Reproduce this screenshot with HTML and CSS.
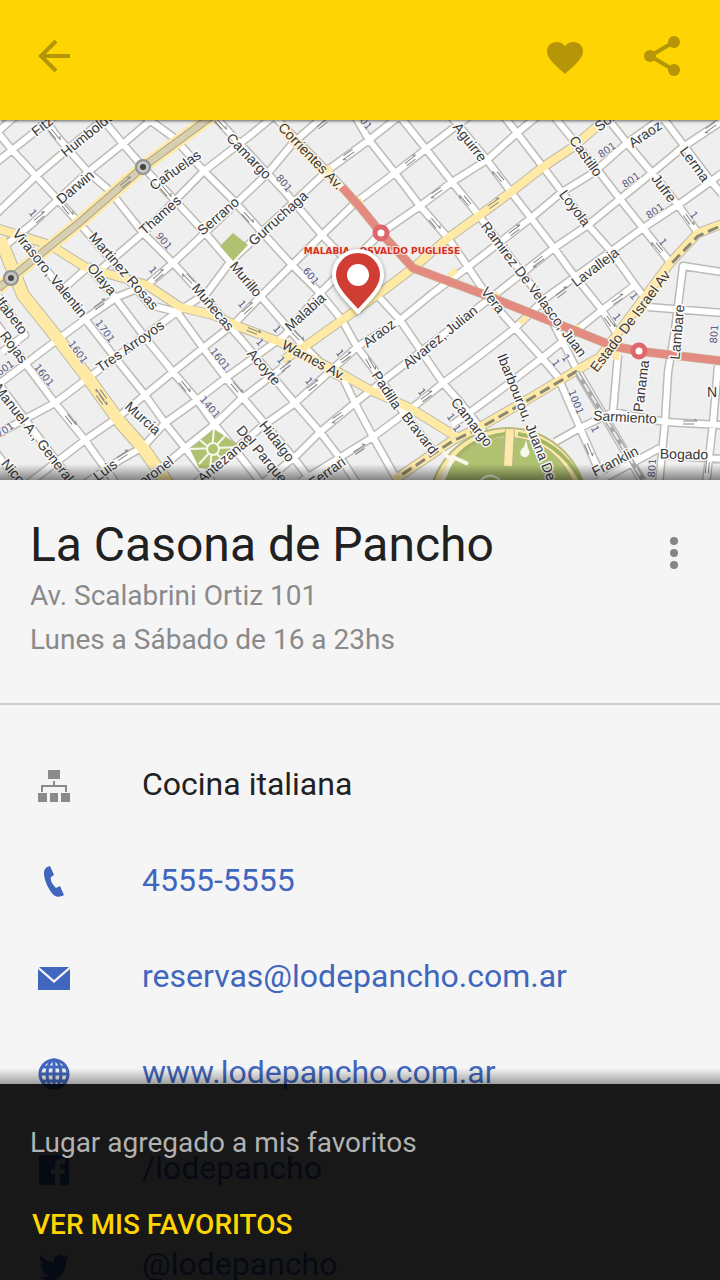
FILE: index.html
```html
<!DOCTYPE html>
<html lang="es">
<head>
<meta charset="utf-8">
<meta name="viewport" content="width=device-width, initial-scale=1">
<title>La Casona de Pancho</title>
<link rel="stylesheet" href="styles.css">
</head>
<body>
<div class="app">
  <header class="toolbar">
    <button class="icon-button" type="button" aria-label="Volver">
      <svg width="32" height="32" viewBox="0 0 32 32"><path class="line" d="M32 16H3M18 1 3 16l15 15"/></svg>
    </button>
    <div class="toolbar-actions">
      <button class="icon-button" type="button" aria-label="Favorito">
        <svg width="36" height="40" viewBox="0 0 36 40"><path d="M18 38 15.4 35.6C6.2 27.3 0 21.7 0 14.9 0 9.9 4.3 6 9.6 6c3.400 0 6.600 1.600 8.400 4.200C19.800 7.600 23 6 26.400 6 31.700 6 36 9.900 36 14.900c0 6.800-6.200 12.400-15.400 20.700Z"/></svg>
      </button>
      <button class="icon-button" type="button" aria-label="Compartir">
        <svg width="36" height="40" viewBox="0 0 36 40"><path class="line" d="M30 6 6 20l24 14"/><circle cx="30" cy="6" r="6"/><circle cx="6" cy="20" r="6"/><circle cx="30" cy="34" r="6"/></svg>
      </button>
    </div>
  </header>

  <section class="map" aria-label="Mapa">
    <svg class="map-canvas" viewBox="0 120 720 360" preserveAspectRatio="xMidYMid slice">
      <defs>
        <path id="streets" d="M-6 128 12 150 36 176 80 224 150 305 177 312 203 348 225 377 255 412 297 462 312 482
          M42 114 55 134 88 172 109 190 143 233 173 263 187 278 240 338 295 403 320 432 343 462 356 482
          M100 116 123 144 143 167 167 192 207 235 230 262 262 298 300 342 330 372 342 378
          M144 116 173 137 204 171 233 200 260 230 292 265 320 293 342 320 357 347 373 368 400 408 437 455
          M214 116 267 173 285 192 322 235 360 275 377 295 400 320 443 383 460 402 494 445
          M272 114 342 187
          M355 116 369 140 395 173 420 206 448 238 468 267 490 300 515 328 542 358 558 377 580 428 604 482
          M398 114 426 149 452 182 477 213 540 297 577 370
          M449 114 487 160 511 192 531 218 554 248 570 270 602 310 618 336
          M502 114 517 133 543 167 562 192 588 225 610 250 635 285 646 300
          M552 114 600 173 620 199 643 228 670 262
          M604 114 627 143 652 173 678 205 698 233
          M660 114 685 147 710 180 722 194
          M-8 166 12 150 55 116
          M-4 214 36 176 62 154 110 114
          M0 250 33 223 88 172 123 144 158 114
          M-6 135 20 112
          M100 270 143 233 204 171 252 134 276 114
          M0 383 53 343 88 317 117 297 147 285 173 263 207 231 268 173 293 143 324 116
          M-2 434 23 420 55 403 88 378 177 312 207 293 230 262 328 170 369 140 402 114
          M20 490 85 440 117 418 145 395 173 372 203 348 236 322 260 297 292 265 322 235 355 203 395 173 426 149 472 114
          M70 494 120 460 143 447 165 423 197 400 227 377 285 335 320 293 381 233 420 206 452 182 487 160 517 133 540 114
          M140 486 185 448 215 424 240 400 283 367
          M195 484 260 428 295 403 357 347 400 320 433 293 468 267 531 218 562 192 593 173 627 143 665 116
          M262 484 297 455 320 432 355 403 388 377 475 310 497 293 554 248 588 225 620 199 652 173 683 147 722 121
          M300 482 373 437 412 408 443 383 483 353 515 328 547 297 617 247 643 228 678 205 710 182 722 173
          M452 425 480 405 507 385 542 358 602 310 635 285
          M342 376 355 403 373 437 396 478
          M-10 285 25 335 2 352M-6 320 25 363 55 403 85 440 115 482M-8 375 72 482M-6 450 20 484
          M15 230 78 310 113 355 145 395 165 423 185 448 212 482
          M87 265 113 295 147 340 173 372 197 400 215 425 233 447 262 484
          M88 267 62 290
          M555 442 580 428 613 412 665 422 722 425M618 355 613 412
          M722 272 683 266 675 330 668 372 665 422 659 484M648 307 722 313
          M718 366 713 423 706 484M662 455 722 459M597 482 660 448M577 370 643 482"/>
        <path id="avenues" d="M-4 228 50 245 85 267 147 285 180 307 213 315 240 327 280 342 340 373 370 390 410 408 457 437
          M614 112 573 147 543 167 511 192 480 215 448 238 413 268 380 293 342 320 307 345 283 360
          M722 224 698 233 670 263 600 357 577 370 530 398 480 427 453 440 394 480"/>
        <path id="boulevard" d="M0 238 23 295 55 335 88 378 120 422 143 448 168 484"/>
        <path id="railway" d="M216 113 143 167 80 222 12 277-6 292"/>
        <path id="subway" d="M342 187 360 207 381 233 413 268 480 293 563 326 613 346 638 351 722 361"/>
        <path id="oneway" d="M-7-1H7M-7 2H4M7-1 4-3"/>
        <linearGradient id="fade" x1="0" y1="0" x2="0" y2="1"><stop offset="0" stop-opacity="0"/><stop offset="1" stop-opacity=".45"/></linearGradient>
      </defs>
      <rect class="land" y="120" x="-2" width="724" height="360"/>
      <use href="#streets" class="street-case"/>
      <use href="#avenues" class="avenue-case"/>
      <use href="#boulevard" class="boulevard-case"/>
      <use href="#streets" class="street-fill"/>
      <use href="#avenues" class="avenue-fill"/>
      <use href="#boulevard" class="boulevard-fill"/>
      <path class="crossing" d="M291 145 297 140M325 172 331 167M352 206 362 200M489 301 498 293M520 323 527 317M572 333 579 326M617 352 616 360M449 276 456 270"/>
      <use href="#railway" class="railway-edge"/><use href="#railway" class="railway-case"/><use href="#railway" class="railway-fill"/>

      <path class="park" d="m220 246 13-13 15 12-15 16Z"/>
      <path class="park" d="m190 449 24-20 11 7 16 11-30 22-12-1Z"/>
      <path class="park-path" d="m190 449 51-2M214 429l-4 40M200 440l26 22M225 436l-26 28"/><circle class="park-path park" cx="213" cy="449" r="6"/>
      <circle class="park" cx="508" cy="507" r="80"/>
      <circle class="park-road-case" cx="508" cy="507" r="74"/><circle class="park-road" cx="508" cy="507" r="74"/>
      <path class="park-median" d="M455 459C468 444 482 437 506 434M518 434C547 438 567 455 582 482"/>
      <path class="park-road-case" d="M510 430 508 466"/><path class="park-road" d="M510 430 508 466"/>
      <path class="park-path" d="M479 482C486 474 493 474 500 480"/>
      <path class="park-walk" d="M441 484 453 457 468 464M443 452 450 459"/>
      <path class="pond" d="m526 440 2 8c4 6-1 10-4 9-5-1-5-7 0-10Z"/>

      <path class="dashes" d="M718 227 698 236 670 265M577 371 530 399 480 428 453 441 398 477"/>
      <path class="rail-line" d="M577 372 643 480"/><path class="rail-dash" d="M577 372 643 480"/>
      <use href="#subway" class="subway-edge"/><use href="#subway" class="subway"/>

      <g class="arrows">
        <use href="#oneway" transform="translate(55 135) rotate(50)"/><use href="#oneway" transform="translate(40 217) rotate(-40)"/>
        <use href="#oneway" transform="translate(68 210) rotate(50)"/><use href="#oneway" transform="translate(126 182) rotate(-38)"/>
        <use href="#oneway" transform="translate(166 192) rotate(50)"/><use href="#oneway" transform="translate(221 125) rotate(48)"/>
        <use href="#oneway" transform="translate(159 275) rotate(-42)"/><use href="#oneway" transform="translate(188 278) rotate(226)"/>
        <use href="#oneway" transform="translate(323 123) rotate(-38)"/><use href="#oneway" transform="translate(348 155) rotate(145)"/>
        <use href="#oneway" transform="translate(411 160) rotate(-38)"/><use href="#oneway" transform="translate(436 193) rotate(145)"/>
        <use href="#oneway" transform="translate(435 224) rotate(50)"/><use href="#oneway" transform="translate(465 200) rotate(230)"/>
        <use href="#oneway" transform="translate(248 218) rotate(48)"/><use href="#oneway" transform="translate(494 203) rotate(-35)"/>
        <use href="#oneway" transform="translate(498 176) rotate(230)"/><use href="#oneway" transform="translate(515 230) rotate(-37)"/>
        <use href="#oneway" transform="translate(538 262) rotate(143)"/><use href="#oneway" transform="translate(562 292) rotate(-37)"/>
        <use href="#oneway" transform="translate(710 128) rotate(145)"/><use href="#oneway" transform="translate(689 220) rotate(54)"/>
        <use href="#oneway" transform="translate(657 247) rotate(230)"/><use href="#oneway" transform="translate(618 299) rotate(-35)"/>
        <use href="#oneway" transform="translate(100 304) rotate(-36)"/><use href="#oneway" transform="translate(185 387) rotate(52)"/>
        <use href="#oneway" transform="translate(71 420) rotate(52)"/><use href="#oneway" transform="translate(123 455) rotate(-34)"/>
        <use href="#oneway" transform="translate(102 400) rotate(54)"/><use href="#oneway" transform="translate(101 394) rotate(234)"/>
        <use href="#oneway" transform="translate(254 331) rotate(22)"/><use href="#oneway" transform="translate(248 308) rotate(-42)"/>
        <use href="#oneway" transform="translate(298 336) rotate(45)"/><use href="#oneway" transform="translate(286 366) rotate(-36)"/>
        <use href="#oneway" transform="translate(313 385) rotate(-36)"/><use href="#oneway" transform="translate(346 357) rotate(-36)"/>
        <use href="#oneway" transform="translate(371 364) rotate(60)"/><use href="#oneway" transform="translate(337 418) rotate(145)"/>
        <use href="#oneway" transform="translate(360 449) rotate(-33)"/><use href="#oneway" transform="translate(427 396) rotate(-36)"/>
        <use href="#oneway" transform="translate(237 388) rotate(50)"/><use href="#oneway" transform="translate(610 322) rotate(54)"/>
        <use href="#oneway" transform="translate(690 422)"/><use href="#oneway" transform="translate(707 466) rotate(-84)"/>
        <use href="#oneway" transform="translate(589 450) rotate(68)"/>
      </g>

      <g class="names">
        <text transform="translate(42 126) rotate(-38)">Fitz</text>
        <text transform="translate(86 135) rotate(-39)">Humboldt</text>
        <text transform="translate(75 187) rotate(-40)">Darwin</text>
        <text transform="translate(175 170) rotate(-35)">Cañuelas</text>
        <text transform="translate(160 215) rotate(-42)">Thames</text>
        <text transform="translate(218 216) rotate(-41)">Serrano</text>
        <text transform="translate(278 218) rotate(-42)">Gurruchaga</text>
        <text transform="translate(249 156) rotate(46)">Camargo</text>
        <text class="avenue-name" transform="translate(311 156) rotate(46)">Corrientes Av.</text>
        <text transform="translate(124 271) rotate(49)">Martinez Rosas</text>
        <text transform="translate(102 279) rotate(50)">Olaya</text>
        <text transform="translate(50 273) rotate(51)">Virasoro, Valentin</text>
        <text transform="translate(213 307) rotate(50)">Muñecas</text>
        <text transform="translate(246 279) rotate(50)">Murillo</text>
        <text transform="translate(305 312) rotate(-42)">Malabia</text>
        <text transform="translate(379 333) rotate(-37)">Araoz</text>
        <text transform="translate(440 337) rotate(-39)">Alvarez, Julian</text>
        <text class="avenue-name" transform="translate(314 360) rotate(28)">Warnes Av.</text>
        <text transform="translate(264 367) rotate(49)">Acoyte</text>
        <text transform="translate(387 390) rotate(57)">Padilla</text>
        <text transform="translate(420 433) rotate(52)">Bravard</text>
        <text transform="translate(472 422) rotate(52)">Camargo</text>
        <text transform="translate(277 441) rotate(52)">Hidalgo</text>
        <text transform="translate(262 454) rotate(50)">Del Parque</text>
        <text transform="translate(222 461) rotate(-40)">Antezana</text>
        <text transform="translate(152 474) rotate(-37)">Coronel</text>
        <text transform="translate(105 470) rotate(-37)">Luis</text>
        <text transform="translate(34 433) rotate(52)">Manuel A., General</text>
        <text transform="translate(9 312) rotate(52)">Alfabeto</text>
        <text transform="translate(14 347) rotate(53)">Rojas</text>
        <text transform="translate(7 464) rotate(50)">o., Nico</text>
        <text transform="translate(143 418) rotate(42)">Murcia</text>
        <text transform="translate(130 346) rotate(-35)">Tres Arroyos</text>
        <text transform="translate(327 472) rotate(-36)">Ferrari</text>
        <text transform="translate(470 142) rotate(52)">Aguirre</text>
        <text transform="translate(586 156) rotate(54)">Castillo</text>
        <text transform="translate(575 208) rotate(53)">Loyola</text>
        <text transform="translate(609 118) rotate(-38)">Soler</text>
        <text transform="translate(645 134) rotate(-34)">Araoz</text>
        <text transform="translate(695 164) rotate(54)">Lerma</text>
        <text transform="translate(664 188) rotate(53)">Jufre</text>
        <text transform="translate(595 267) rotate(-37)">Lavalleja</text>
        <text transform="translate(534 289) rotate(53)">Ramirez De Velasco, Juan</text>
        <text transform="translate(493 300) rotate(52)">Vera</text>
        <text class="avenue-name" transform="translate(630 321) rotate(-53)">Estado De Israel Av</text>
        <text transform="translate(527 417) rotate(68)">Ibarbourou, Juana De</text>
        <text transform="translate(677 332) rotate(-85)">Lambare</text>
        <text transform="translate(641 386) rotate(-83)">Panama</text>
        <text transform="translate(625 417) rotate(3)">Sarmiento</text>
        <text transform="translate(684 454) rotate(1)">Bogado</text>
        <text transform="translate(615 461) rotate(-27)">Franklin</text>
        <text transform="translate(712 392)">N</text>
      </g>
      <g class="numbers">
        <text transform="translate(164 241) rotate(50)">901</text><text transform="translate(284 183) rotate(50)">801</text>
        <text transform="translate(311 276) rotate(50)">601</text><text transform="translate(105 331) rotate(54)">1701</text>
        <text transform="translate(78 352) rotate(54)">1601</text><text transform="translate(44 375) rotate(52)">1601</text>
        <text transform="translate(5 368) rotate(-35)">601</text><text transform="translate(5 430) rotate(-35)">701</text>
        <text transform="translate(220 359) rotate(52)">1601</text><text transform="translate(210 407) rotate(50)">1401</text>
        <text transform="translate(607 150) rotate(-34)">801</text><text transform="translate(631 180) rotate(-34)">801</text>
        <text transform="translate(655 211) rotate(-34)">801</text><text transform="translate(576 402) rotate(68)">1001</text>
        <text transform="translate(652 468) rotate(-86)">801</text><text transform="translate(714 334) rotate(-85)">801</text>
        <text transform="translate(364 121) rotate(50)">801</text>
        <text transform="translate(33 213) rotate(50)">1</text><text transform="translate(153 270) rotate(50)">1</text>
        <text transform="translate(242 304) rotate(50)">1</text><text transform="translate(277 329) rotate(50)">1</text>
        <text transform="translate(260 342) rotate(50)">1</text><text transform="translate(281 360) rotate(50)">1</text>
        <text transform="translate(309 381) rotate(50)">1</text><text transform="translate(340 353) rotate(50)">1</text>
        <text transform="translate(422 392) rotate(50)">1</text><text transform="translate(451 417) rotate(54)">1</text><text transform="translate(457 428) rotate(54)">1</text>
        <text transform="translate(556 363) rotate(54)">1</text><text transform="translate(566 358) rotate(54)">1</text>
        <text transform="translate(617 317) rotate(54)">1</text><text transform="translate(634 296) rotate(54)">1</text>
        <text transform="translate(663 242) rotate(54)">1</text><text transform="translate(694 215) rotate(54)">1</text><text transform="translate(595 429) rotate(64)">1</text>
      </g>
      <g class="rail-stop"><circle cx="143" cy="167" r="7"/><circle cx="11" cy="278" r="7"/></g>
      <g class="rail-dot"><circle cx="143" cy="167" r="3"/><circle cx="11" cy="278" r="3"/></g>
      <g class="subway-stop"><circle cx="381" cy="233" r="6"/><circle cx="639" cy="351" r="6"/></g>
      <text class="station" x="382" y="254">MALABIA - OSVALDO PUGLIESE</text>
      <rect x="-2" y="464" width="724" height="16" fill="url(#fade)"/>
      <path class="pin" d="M358 312C351 303 334 290 334 275a24 24 0 0 1 48 0C382 290 365 303 358 312Z"/>
      <circle class="pin-hole" cx="358" cy="275" r="11"/>
    </svg>
  </section>

  <section class="place">
    <div class="place-text">
      <h1>La Casona de Pancho</h1>
      <p>Av. Scalabrini Ortiz 101</p>
      <p>Lunes a Sábado de 16 a 23hs</p>
    </div>
    <button class="icon-button more" type="button" aria-label="Más opciones">
      <svg width="12" height="36" viewBox="0 0 12 36"><circle cx="6" cy="6" r="4"/><circle cx="6" cy="18" r="4"/><circle cx="6" cy="30" r="4"/></svg>
    </button>
  </section>

  <ul class="details">
    <li class="category">
      <svg width="32" height="32" viewBox="0 0 32 32"><path d="M10 0h12v9H10ZM0 23h9v9H0ZM12 23h8v9h-8ZM23 23h9v9h-9Z"/><path class="thin" d="M4 22v-6h24v6M16 11v5"/></svg>
      <span>Cocina italiana</span>
    </li>
    <li>
      <svg width="32" height="32" viewBox="0 0 32 32"><path d="m12 0 4 9-3 2c-1 4 2 8 5 11l4-2 4 9c-5 3-10 2-13-3C9 20 6 13 6 7c0-4 2-6 6-7Z"/></svg>
      <a href="tel:45555555">4555-5555</a>
    </li>
    <li>
      <svg width="32" height="32" viewBox="0 0 32 32"><path d="M1 5h30L16 18ZM0 7l16 14L32 7v21H0Z"/></svg>
      <a href="mailto:reservas@lodepancho.com.ar">reservas@lodepancho.com.ar</a>
    </li>
    <li>
      <svg width="32" height="32" viewBox="0 0 32 32"><g class="globe"><circle cx="16" cy="16" r="14"/><ellipse cx="16" cy="16" rx="7" ry="14"/><path d="M16 2v28M2 16h28M4 9h24M4 23h24"/></g></svg>
      <a href="http://www.lodepancho.com.ar">www.lodepancho.com.ar</a>
    </li>
    <li>
      <svg width="32" height="32" viewBox="0 0 32 32"><path d="M3 1h26a2 2 0 0 1 2 2v26a2 2 0 0 1-2 2h-7V20h4l1-5h-5v-3c0-2 1-2 5-2V5h-4c-4 0-6 2-6 6v4h-4v5h4v11H3a2 2 0 0 1-2-2V3a2 2 0 0 1 2-2Z"/></svg>
      <a href="#facebook">/lodepancho</a>
    </li>
    <li>
      <svg width="32" height="32" viewBox="0 0 32 32"><path d="M31 7c-1 1-2 1-3 1 1-1 2-2 2-3-1 1-2 1-4 2-4-5-11-1-10 5-5 0-10-3-13-7-2 3-1 7 2 9-1 0-2 0-3-1 0 3 2 6 5 7H4c1 3 3 4 6 5-3 2-6 3-9 2 12 8 28 1 27-17 1-1 2-2 3-3Z"/></svg>
      <a href="#twitter">@lodepancho</a>
    </li>
  </ul>

  <aside class="snackbar" role="status">
    <p>Lugar agregado a mis favoritos</p>
    <button type="button">VER MIS FAVORITOS</button>
  </aside>
</div>
</body>
</html>
```

FILE: styles.css
```css
* {
  box-sizing: border-box;
}

body {
  margin: 0;
  background: #f5f5f5;
  color: #212121;
  font-family: Roboto, "Liberation Sans", sans-serif;
}

h1, p, ul {
  margin: 0;
  padding: 0;
}

svg {
  display: block;
}

button {
  padding: 0;
  border: 0;
  background: none;
  color: inherit;
  font: inherit;
  cursor: pointer;
}

.app {
  position: relative;
  display: flex;
  flex-direction: column;
  height: 100vh;
  overflow: hidden;
}

/* Toolbar */
.toolbar {
  position: relative;
  z-index: 1;
  flex: none;
  display: flex;
  align-items: center;
  justify-content: space-between;
  padding: 36px 40px 44px 38px;
  background: #ffd403;
  box-shadow: 0 1px 3px rgba(0, 0, 0, .6);
  color: #b59608;
}

.toolbar-actions {
  display: flex;
  gap: 61px;
}

.icon-button svg {
  fill: currentColor;
}

.icon-button .line {
  fill: none;
  stroke: currentColor;
  stroke-width: 4;
}

/* Map */
.map {
  flex: none;
  height: 360px;
}

.map-canvas {
  width: 100%;
  height: 100%;
}

.map-canvas use,
.map-canvas path {
  fill: none;
  stroke-linejoin: round;
}

.land { fill: #efefef; }
.street-case { stroke: #bdbbb6; stroke-width: 9; }
.street-fill { stroke: #fff; stroke-width: 6; }
.avenue-case { stroke: #bdb9ab; stroke-width: 10; }
.avenue-fill { stroke: #ffeaa5; stroke-width: 8; }
.boulevard-case { stroke: #bdb9a8; stroke-width: 14; }
.boulevard-fill { stroke: #ffeaa5; stroke-width: 12; }
.map-canvas .crossing { stroke: #ffeaa5; stroke-width: 6; }
.railway-edge { stroke: #ffeaa5; stroke-width: 13; }
.railway-case { stroke: #aaa38c; stroke-width: 8; }
.railway-fill { stroke: #d8cfb0; stroke-width: 6; }

.map-canvas .park { fill: #b0c272; }
.map-canvas .park-path { stroke: #f6f8ea; stroke-width: 2; }
.map-canvas .park-walk { stroke: #f6f8ea; stroke-width: 4; }
.park-road-case { fill: none; stroke: #b9b18a; stroke-width: 10; }
.park-road { fill: none; stroke: #fdeaab; stroke-width: 8; }
.map-canvas .park-median { stroke: #a3b764; stroke-width: 4; }
.map-canvas .pond { fill: #f6f8ea; }

.map-canvas .dashes { stroke: #8a8778; stroke-width: 3; stroke-dasharray: 11 5; }
.map-canvas .rail-line { stroke: #a9a9a7; stroke-width: 5; }
.map-canvas .rail-dash { stroke: #efefef; stroke-width: 2; stroke-dasharray: 9 5; }
.subway-edge { stroke: #cfa58c; stroke-width: 9; }
.subway { stroke: #e58a80; stroke-width: 7; }
.arrows { stroke: #858585; stroke-width: 1; }

.names,
.numbers {
  font-family: "Liberation Sans", Arial, sans-serif;
  font-size: 14px;
  text-anchor: middle;
  dominant-baseline: central;
  paint-order: stroke;
  stroke: #fafafa;
  stroke-width: 3;
  stroke-linejoin: round;
  fill: #383838;
}

.names .avenue-name {
  stroke: #fff1d4;
}

.numbers {
  font-family: "DejaVu Sans", sans-serif;
  font-size: 10px;
  stroke: #f1f1f5;
  stroke-width: 2;
  fill: #5b5b7c;
}

.rail-stop { fill: #c5c5c5; stroke: #929292; stroke-width: 2; }
.rail-dot { fill: #444; }
.subway-stop { fill: #fff; stroke: #df666b; stroke-width: 5; }

.station {
  font: bold 9px "DejaVu Sans", sans-serif;
  text-anchor: middle;
  fill: #d5301f;
  paint-order: stroke;
  stroke: #f7e6df;
  stroke-width: 2;
}

.map-canvas .pin {
  fill: #d03d34;
  stroke: #fff;
  stroke-width: 4;
  filter: drop-shadow(0 1px 2px rgba(0, 0, 0, .4));
}

.pin-hole {
  fill: #fff;
}

/* Place heading */
.place {
  flex: none;
  display: flex;
  align-items: flex-start;
  justify-content: space-between;
  padding: 36px 40px 41px 30px;
  border-bottom: 2px solid #ccc;
}

.place h1 {
  font-size: 48px;
  font-weight: 400;
  line-height: 58px;
}

.place p {
  color: #8a8a8a;
  font-size: 28px;
  line-height: 44px;
}

.more {
  margin-top: 19px;
  color: #858585;
}

/* Contact rows */
.details {
  flex: 1;
  min-height: 0;
  padding-top: 31px;
  overflow-y: auto;
  scrollbar-width: none;
  list-style: none;
}

.details li {
  display: flex;
  align-items: center;
  gap: 72px;
  height: 96px;
  padding: 4px 38px 0;
  color: #4166bd;
  font-size: 32px;
  line-height: 40px;
}

.details a,
.details span {
  margin-bottom: 4px;
  color: inherit;
  text-decoration: none;
}

.details svg {
  flex: none;
  fill: currentColor;
}

.details .category {
  color: #212121;
}

.category svg {
  color: #8a8a8a;
}

.thin,
.globe {
  fill: none;
  stroke: currentColor;
  stroke-width: 2;
}

.globe {
  stroke-width: 3;
}

/* Notification */
.snackbar {
  position: absolute;
  right: 0;
  bottom: 0;
  left: 0;
  display: flex;
  flex-direction: column;
  align-items: flex-start;
  gap: 42px;
  padding: 39px 30px 35px;
  background: rgba(0, 0, 0, .9);
  color: #b2b2b2;
  font-size: 28px;
  line-height: 40px;
}

.snackbar::before {
  content: "";
  position: absolute;
  right: 0;
  bottom: 100%;
  left: 0;
  height: 16px;
  background: linear-gradient(transparent, rgba(0, 0, 0, .35));
}

.snackbar button {
  padding-left: 2px;
  color: #ffd403;
  font-weight: 500;
}
```
